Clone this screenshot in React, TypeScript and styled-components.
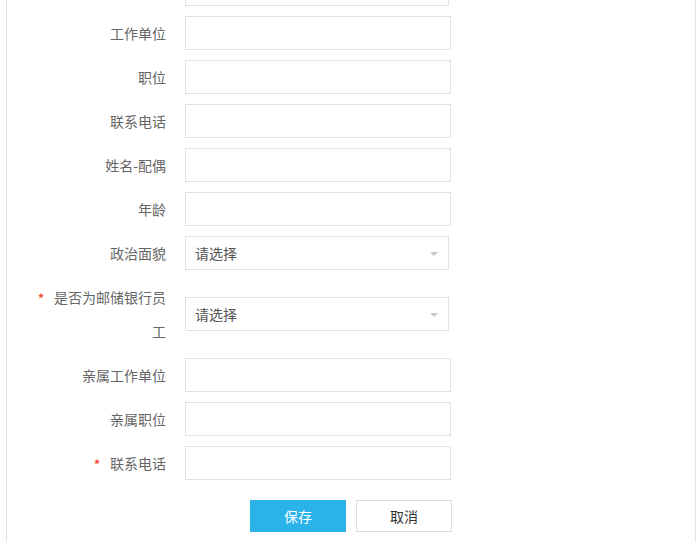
import React from "react";
import styled, { createGlobalStyle } from "styled-components";

const Global = createGlobalStyle`
  html, body { margin: 0; padding: 0; background: #ffffff; }
  body { font-family: "Noto Sans CJK SC", "Noto Sans", sans-serif; overflow: hidden; }
  * { box-sizing: border-box; }
`;

const Panel = styled.div`
  margin-left: 6px;
  width: 690px;
  min-height: 600px;
  border-left: 1px solid #e3e3e3;
  border-right: 1px solid #e3e3e3;
  background: #fff;
`;

const Form = styled.div`
  margin-top: -28px;
  padding-left: 29px;
  display: flex;
  flex-direction: column;
`;

const Row = styled.div`
  display: flex;
  align-items: center;
  gap: 19px;
  margin-bottom: 10px;
`;

const Label = styled.label`
  width: 130px;
  flex: none;
  text-align: right;
  font-size: 14px;
  line-height: 34px;
  color: #666;
`;

const Star = styled.span`
  color: #f3452f;
  font-size: 12px;
  line-height: 1;
  font-weight: bold;
  margin-right: 10px;
`;

const Input = styled.input`
  width: 266px;
  height: 34px;
  border: 1px solid #e1e1e1;
  border-radius: 0;
  outline: none;
  padding: 0 9px;
  font-size: 14px;
  font-family: inherit;
  color: #555;
  background: #fff;
`;

const Select = styled.div`
  width: 264px;
  height: 34px;
  border: 1px solid #e1e1e1;
  background: #fff;
  display: flex;
  align-items: center;
  justify-content: space-between;
  padding: 0 10px 0 9px;
  font-size: 14px;
  color: #555;
`;

const Arrow = styled.span`
  width: 0;
  height: 0;
  margin-left: auto;
  border-left: 4px solid transparent;
  border-right: 4px solid transparent;
  border-top: 4px solid #c8c8c8;
  margin-top: 2px;
`;

const Buttons = styled.div`
  display: flex;
  justify-content: center;
  gap: 10px;
  margin-top: 10px;
  margin-left: -29px;
`;

const Button = styled.button<{ $primary?: boolean }>`
  width: 96px;
  height: 32px;
  font-family: inherit;
  font-size: 14px;
  border-radius: 0;
  cursor: pointer;
  border: 1px solid ${(p) => (p.$primary ? "#29b3e8" : "#dedede")};
  background: ${(p) => (p.$primary ? "#29b3e8" : "#fff")};
  color: ${(p) => (p.$primary ? "#fff" : "#333")};
`;

type Field = { label: string; type: "input" | "select"; required?: boolean; placeholder?: string };

const fields: Field[] = [
  { label: "", type: "select", placeholder: "" },
  { label: "工作单位", type: "input" },
  { label: "职位", type: "input" },
  { label: "联系电话", type: "input" },
  { label: "姓名-配偶", type: "input" },
  { label: "年龄", type: "input" },
  { label: "政治面貌", type: "select" },
  { label: "是否为邮储银行员工", type: "select", required: true },
  { label: "亲属工作单位", type: "input" },
  { label: "亲属职位", type: "input" },
  { label: "联系电话", type: "input", required: true },
];

export default function App() {
  return (
    <>
      <Global />
      <Panel>
        <Form>
          {fields.map((f, i) => (
            <Row key={i}>
              <Label>
                {f.required && <Star>*</Star>}
                {f.label}
              </Label>
              {f.type === "input" ? (
                <Input type="text" />
              ) : (
                <Select>
                  {(f.placeholder ?? "请选择") !== "" && <span>{f.placeholder ?? "请选择"}</span>}
                  <Arrow />
                </Select>
              )}
            </Row>
          ))}
          <Buttons>
            <Button $primary>保存</Button>
            <Button>取消</Button>
          </Buttons>
        </Form>
      </Panel>
    </>
  );
}
